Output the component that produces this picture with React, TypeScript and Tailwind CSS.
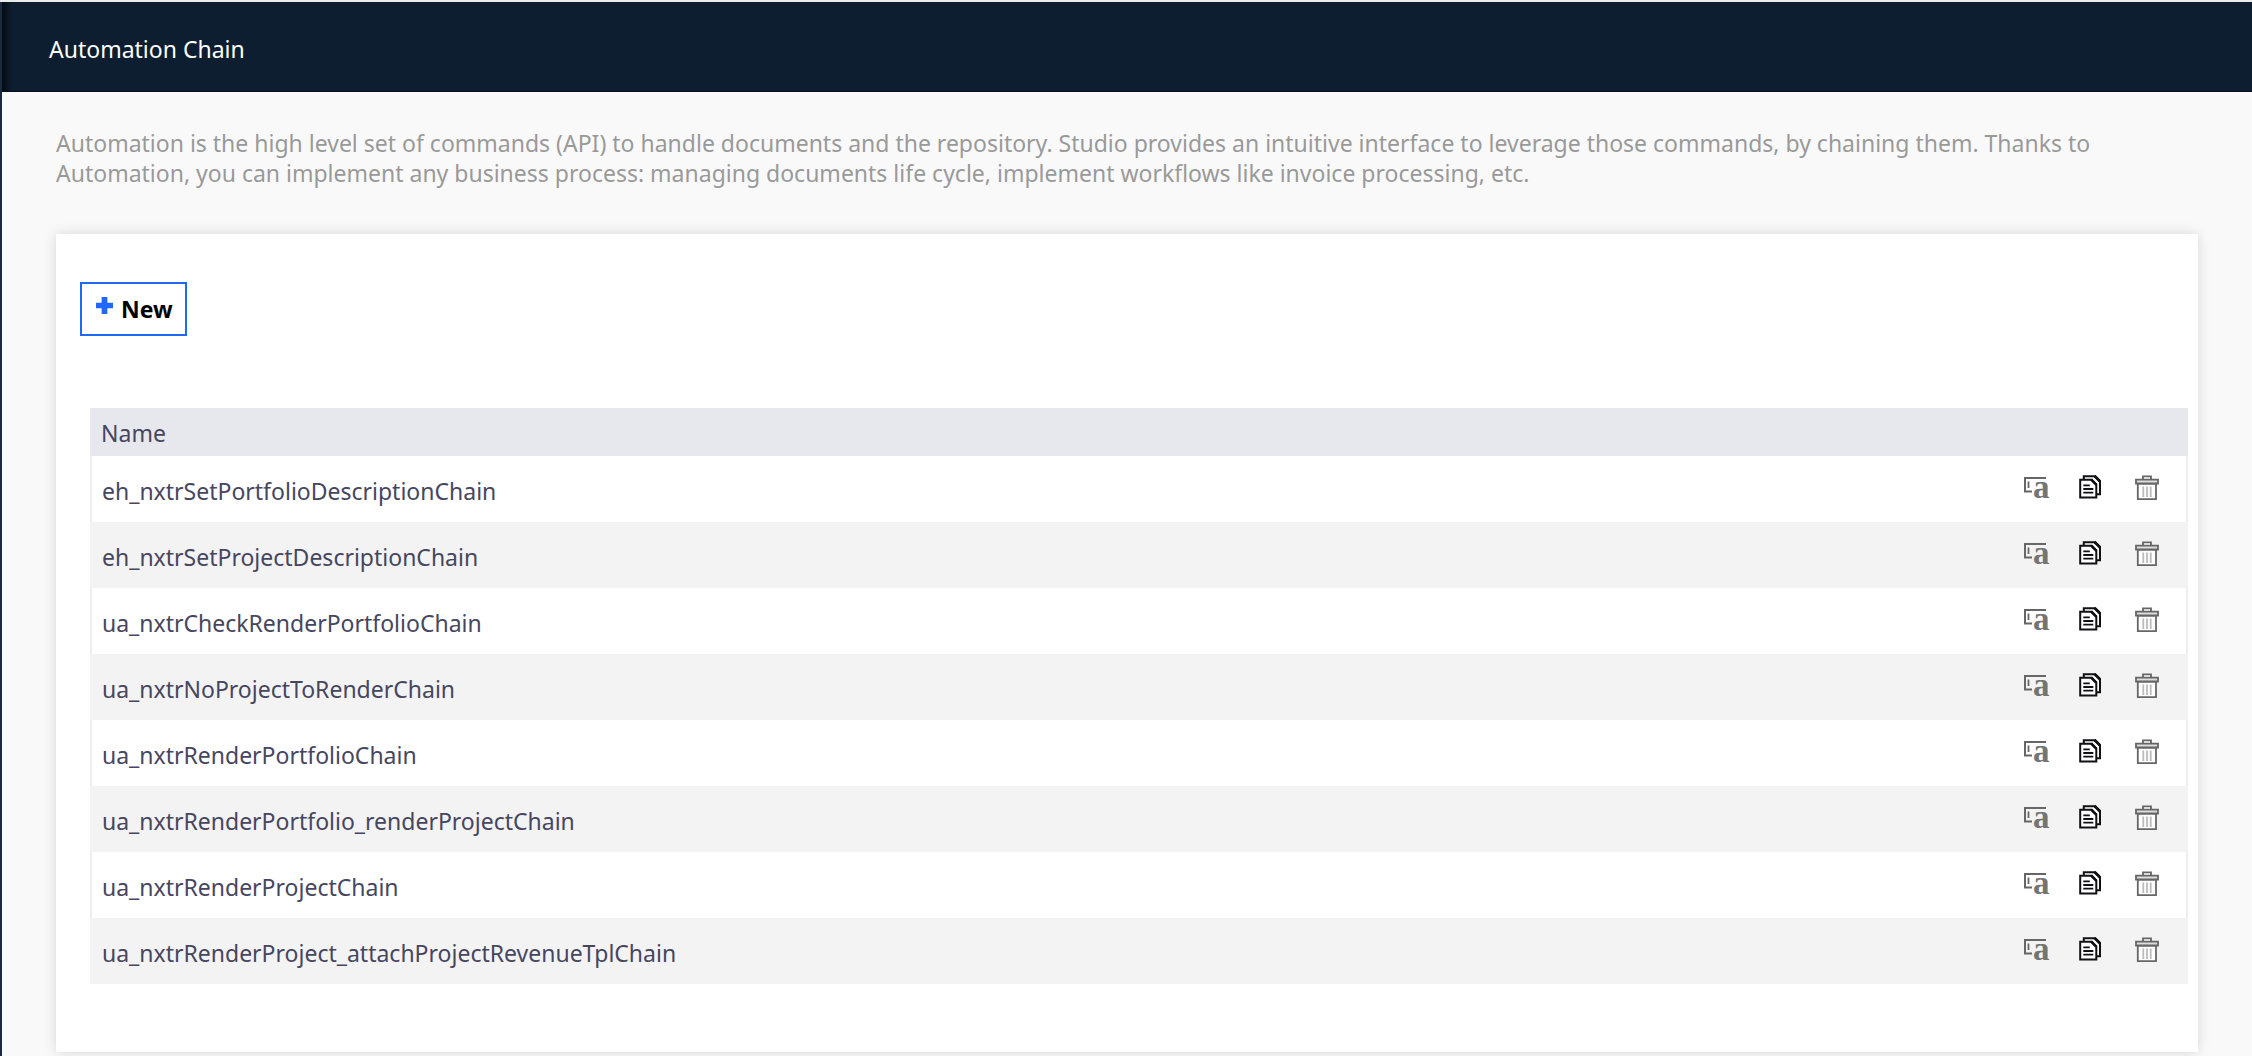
const chains = [
  'eh_nxtrSetPortfolioDescriptionChain',
  'eh_nxtrSetProjectDescriptionChain',
  'ua_nxtrCheckRenderPortfolioChain',
  'ua_nxtrNoProjectToRenderChain',
  'ua_nxtrRenderPortfolioChain',
  'ua_nxtrRenderPortfolio_renderProjectChain',
  'ua_nxtrRenderProjectChain',
  'ua_nxtrRenderProject_attachProjectRevenueTplChain',
];

function PlusIcon() {
  return (
    <svg width="17" height="17" viewBox="0 0 16 16" aria-hidden="true">
      <path d="M5.300 0h5.400v5.300H16v5.400h-5.300V16h-5.400v-5.300H0v-5.400h5.300z" fill="#2069f8" />
    </svg>
  );
}

function RenameIcon() {
  return (
    <svg width="24" height="26" viewBox="0 0 24 26" aria-hidden="true" className="overflow-visible">
      <path d="M23 3H2v13.500h7" fill="none" stroke="#666" strokeWidth="2" />
      <path d="M5.500 6.500v6.500" stroke="#666" strokeWidth="1.800" />
      <text x="10" y="23" fontSize="33" fontWeight="700" fill="#747474" fontFamily="Liberation Serif, serif">
        a
      </text>
    </svg>
  );
}

function CopyIcon() {
  return (
    <svg width="24" height="26" viewBox="0 0 24 26" aria-hidden="true" fill="none" stroke="#111114" strokeWidth="2">
      <path d="M4.800 4.800V1.200h11.500l4.700 4.800v13.200h-3.500" fill="#fff" />
      <path d="M1.200 4.800h11.300l4.800 4.800v12.900H1.200z" fill="#fff" />
      <path d="M12.200 4.500l5.300 5.300M15.500 1l5.500 5.500" strokeWidth="2.600" />
      <path d="M4.300 10.400h6.500M4.300 14h10M4.300 17.600h10" strokeWidth="1.800" />
    </svg>
  );
}

function TrashIcon() {
  return (
    <svg width="24" height="26" viewBox="0 0 24 26" aria-hidden="true" fill="none" stroke="#666" strokeWidth="1.800">
      <path d="M8 4.500V1.300h8v3.200" fill="#fff" />
      <path d="M2.800 8.500h18.200v15.700H2.800z" fill="#fff" />
      <path d="M1 4.700h22v3.800H1z" fill="#ddd" />
      <path d="M8.300 11.500v10.500M12 11.500v10.500M15.700 11.500v10.500" stroke="#bbb" />
    </svg>
  );
}

export default function App() {
  return (
    <div className="flex min-h-screen flex-col border-t-2 border-[#e8eaed] bg-[#f9f9f9] font-['Noto_Sans','Open_Sans',sans-serif] text-[23px]/[30px]">
      <div className="flex-1 border-l-2 border-[#1b2a3e]">
        <header className="relative border-b border-[#06101f] bg-[#0d1e30] pt-8 pb-[27px] pl-[47px] text-white">
          <div className="absolute inset-y-0 left-0 w-2.5 bg-linear-to-r from-[#030a14] to-transparent" />
          <h1>Automation Chain</h1>
        </header>
        <main className="px-[54px] pt-9 pb-1">
          <p className="pr-10 text-[#999]">
            Automation is the high level set of commands (API) to handle documents and the repository. Studio provides an
            intuitive interface to leverage those commands, by chaining them. Thanks to Automation, you can implement any
            business process: managing documents life cycle, implement workflows like invoice processing, etc.
          </p>
          <section className="mt-[46px] bg-white pt-12 pr-2.5 pb-[68px] pl-[34px] shadow-[0_0_12px_rgba(0,0,0,0.14)]">
            <button
              type="button"
              className="-ml-2.5 flex items-start gap-2 border-2 border-[#2069f8] py-2.5 pr-3 pl-3.5 font-bold text-black"
            >
              <span className="pt-[3px]">
                <PlusIcon />
              </span>
              New
            </button>
            <table className="mt-[72px] w-full border-separate border-spacing-0 text-left text-[#46465f]">
              <thead>
                <tr className="bg-[#e6e8ed]">
                  <th scope="col" colSpan={2} className="px-[11px] pt-2.5 pb-2 font-normal">
                    Name
                  </th>
                </tr>
              </thead>
              <tbody>
                {chains.map((name) => (
                  <tr key={name} className="border-[#eee] even:border-[#f3f3f3] even:bg-[#f3f3f3]">
                    <td className="border-l-2 border-inherit pt-5 pb-4 pl-2.5">{name}</td>
                    <td className="border-r-2 border-inherit pt-[19px] pr-[27px] align-top">
                      <div className="flex justify-end gap-8">
                        <button type="button" aria-label={`Rename ${name}`}>
                          <RenameIcon />
                        </button>
                        <button type="button" aria-label={`Copy ${name}`}>
                          <CopyIcon />
                        </button>
                        <button type="button" aria-label={`Delete ${name}`}>
                          <TrashIcon />
                        </button>
                      </div>
                    </td>
                  </tr>
                ))}
              </tbody>
            </table>
          </section>
        </main>
      </div>
    </div>
  );
}
